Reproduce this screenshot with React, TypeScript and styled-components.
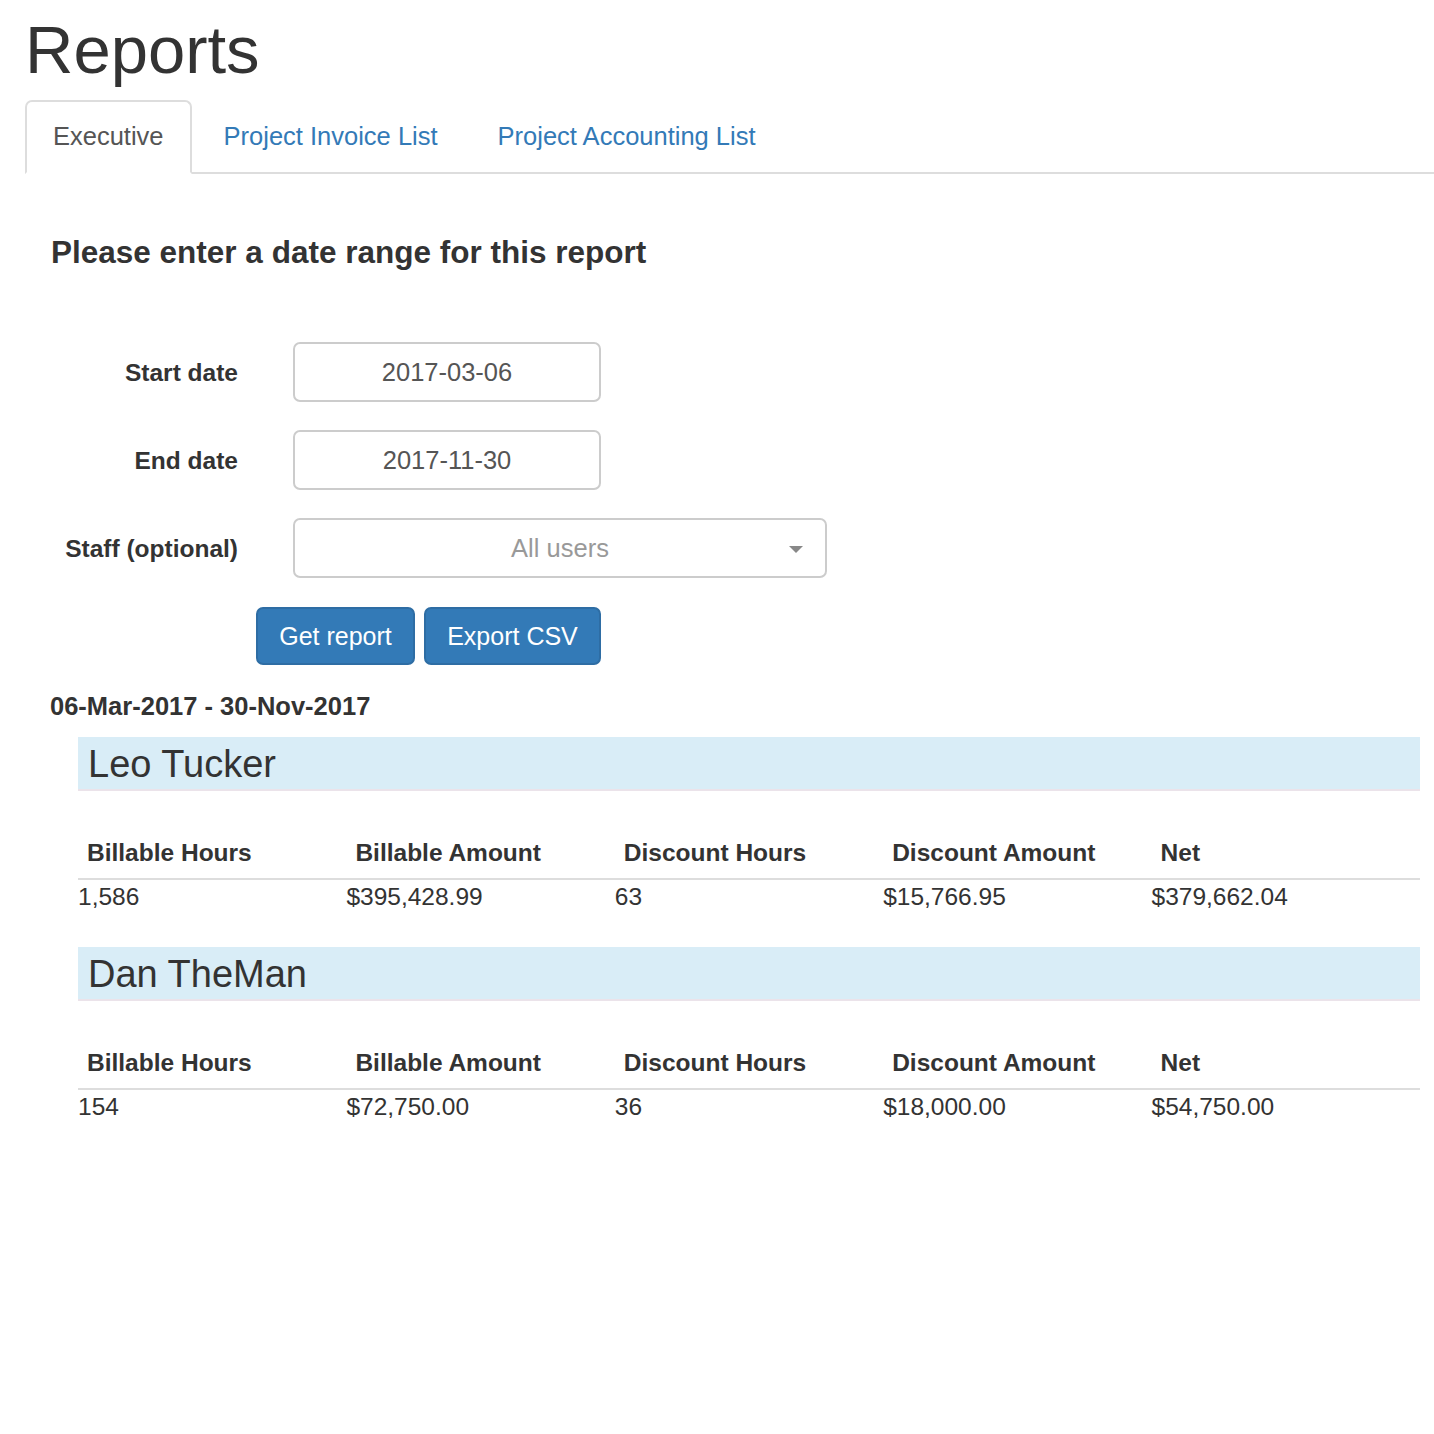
import React from "react";
import styled, { createGlobalStyle } from "styled-components";

type Summary = {
    name: string;
    billableHours: string;
    billableAmount: string;
    discountHours: string;
    discountAmount: string;
    net: string;
};

const SUMMARIES: Summary[] = [
    {
        name: "Leo Tucker",
        billableHours: "1,586",
        billableAmount: "$395,428.99",
        discountHours: "63",
        discountAmount: "$15,766.95",
        net: "$379,662.04",
    },
    {
        name: "Dan TheMan",
        billableHours: "154",
        billableAmount: "$72,750.00",
        discountHours: "36",
        discountAmount: "$18,000.00",
        net: "$54,750.00",
    },
];

const TABS = ["Executive", "Project Invoice List", "Project Accounting List"];

const App = () => {
    return (
        <>
            <GlobalStyle />
            <Page>
                <Title>Reports</Title>
                <TabBar>
                    {TABS.map((tab, i) => (
                        <Tab key={tab} $active={i === 0}>
                            {tab}
                        </Tab>
                    ))}
                </TabBar>
                <Content>
                    <Prompt>Please enter a date range for this report</Prompt>
                    <Form>
                        <Label>Start date</Label>
                        <Field $width={308}>2017-03-06</Field>
                        <Label>End date</Label>
                        <Field $width={308}>2017-11-30</Field>
                        <Label>Staff (optional)</Label>
                        <Field $width={534} $muted>
                            All users
                            <Caret />
                        </Field>
                    </Form>
                    <Buttons>
                        <Button $width={159}>Get report</Button>
                        <Button $width={177}>Export CSV</Button>
                    </Buttons>
                    <Range>06-Mar-2017 - 30-Nov-2017</Range>
                </Content>
                <Results>
                    {SUMMARIES.map((s) => (
                        <section key={s.name}>
                            <PanelHead>{s.name}</PanelHead>
                            <Table>
                                <thead>
                                    <tr>
                                        <th>Billable Hours</th>
                                        <th>Billable Amount</th>
                                        <th>Discount Hours</th>
                                        <th>Discount Amount</th>
                                        <th>Net</th>
                                    </tr>
                                </thead>
                                <tbody>
                                    <tr>
                                        <td>{s.billableHours}</td>
                                        <td>{s.billableAmount}</td>
                                        <td>{s.discountHours}</td>
                                        <td>{s.discountAmount}</td>
                                        <td>{s.net}</td>
                                    </tr>
                                </tbody>
                            </Table>
                        </section>
                    ))}
                </Results>
            </Page>
        </>
    );
};

export default App;

const GlobalStyle = createGlobalStyle`
    body {
        margin: 0;
        background: #fff;
        color: #333;
        font-family: "Liberation Sans", Arial, sans-serif;
        font-size: 24.5px;
        line-height: 35px;
    }
`;

const Page = styled.div`
    padding: 15px 0 200px 25px;
`;

const Title = styled.h1`
    margin: 0;
    font-size: 67px;
    line-height: 70px;
    font-weight: 400;
    color: #333;
`;

const TabBar = styled.ul`
    display: flex;
    margin: 15px 0 0;
    padding: 0;
    list-style: none;
    border-bottom: 2px solid #ddd;
`;

const Tab = styled.li<{ $active?: boolean }>`
    margin: 0 4px -2px 0;
    padding: 17px 26px 18px;
    border: 2px solid ${(p) => (p.$active ? "#ddd" : "transparent")};
    border-bottom-color: ${(p) => (p.$active ? "#fff" : "transparent")};
    border-radius: 7px 7px 0 0;
    background: ${(p) => (p.$active ? "#fff" : "transparent")};
    color: ${(p) => (p.$active ? "#555" : "#337ab7")};
    font-size: 25.5px;
    line-height: 35px;
`;

const Content = styled.div`
    padding-left: 26px;
`;

const Prompt = styled.h4`
    margin: 58px 0 0;
    font-size: 31.5px;
    line-height: 40px;
    font-weight: 700;
    color: #333;
`;

const Form = styled.div`
    display: grid;
    grid-template-columns: 213px auto;
    column-gap: 55px;
    row-gap: 28px;
    align-items: center;
    justify-items: start;
    margin: 70px 0 0 -26px;
`;

const Label = styled.label`
    justify-self: end;
    font-weight: 700;
    color: #333;
`;

const Field = styled.div<{ $width: number; $muted?: boolean }>`
    position: relative;
    box-sizing: border-box;
    width: ${(p) => p.$width}px;
    height: 60px;
    border: 2px solid #ccc;
    border-radius: 7px;
    display: flex;
    align-items: center;
    justify-content: center;
    font-size: 25.5px;
    color: ${(p) => (p.$muted ? "#999" : "#555")};
`;

const Caret = styled.span`
    position: absolute;
    right: 22px;
    top: 26px;
    width: 0;
    height: 0;
    border-left: 7px solid transparent;
    border-right: 7px solid transparent;
    border-top: 7px solid #888;
`;

const Buttons = styled.div`
    display: flex;
    gap: 9px;
    margin: 29px 0 0 205px;
`;

const Button = styled.button<{ $width: number }>`
    box-sizing: border-box;
    width: ${(p) => p.$width}px;
    height: 58px;
    border: 2px solid #2e6da4;
    border-radius: 7px;
    background: #337ab7;
    color: #fff;
    font-family: inherit;
    font-size: 25px;
    padding: 0;
`;

const Range = styled.div`
    margin: 24px 0 0 -1px;
    font-size: 25.5px;
    font-weight: 700;
`;

const Results = styled.div`
    margin: 13px 14px 0 53px;
    section + section {
        margin-top: 33px;
    }
`;

const PanelHead = styled.h3`
    margin: 0;
    padding: 0 10px;
    height: 52px;
    background: #d9edf7;
    border-bottom: 2px solid #ebe3ea;
    font-size: 38px;
    line-height: 54px;
    font-weight: 400;
    color: #333;
`;

const Table = styled.table`
    width: 100%;
    margin-top: 44px;
    border-collapse: collapse;
    table-layout: fixed;
    th {
        text-align: left;
        font-weight: 700;
        padding: 0 0 8px 9px;
        border-bottom: 2px solid #ddd;
        line-height: 35px;
    }
    td {
        padding: 0;
        line-height: 34px;
    }
`;
